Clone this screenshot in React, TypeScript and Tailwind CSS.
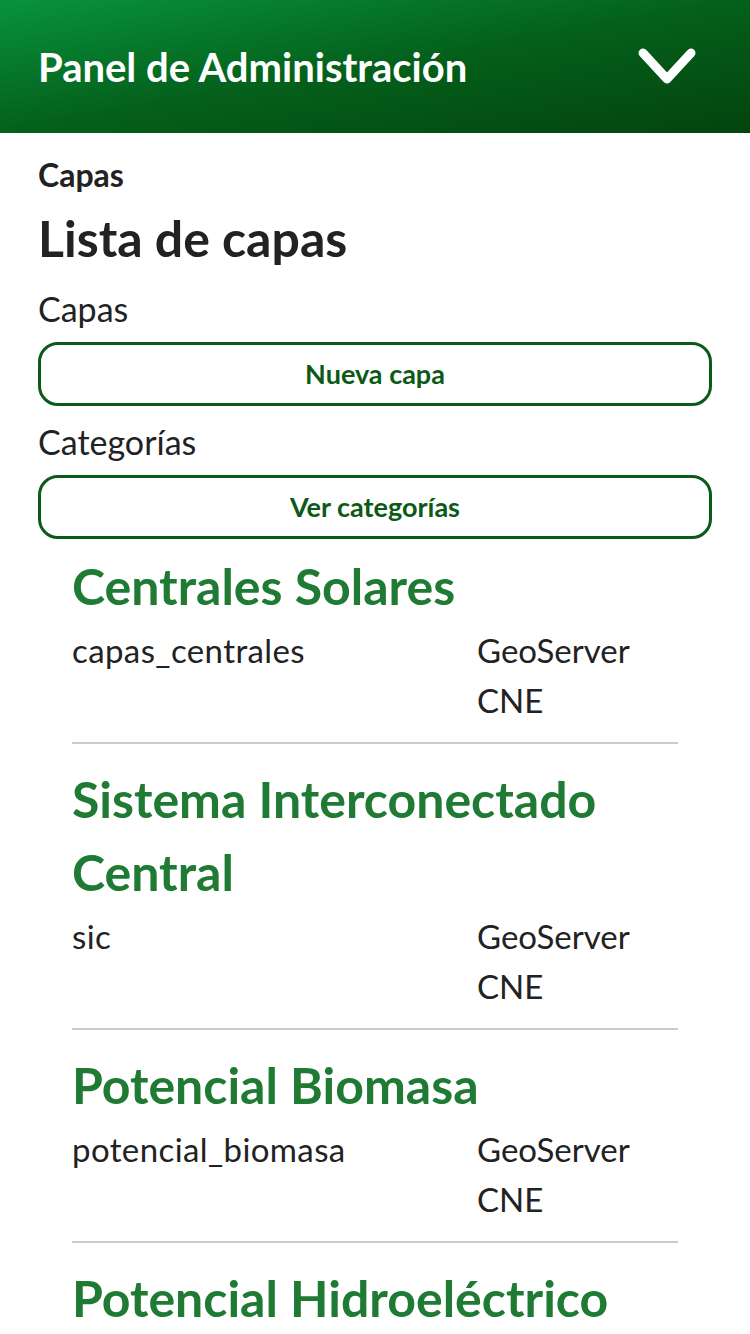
import React from "react";

const capas = [
  { title: "Sistema Interconectado Central", key: "sic" },
  { title: "Potencial Biomasa", key: "potencial_biomasa" },
];

const font = { fontFamily: "Lato, 'Noto Sans', sans-serif" };

const CapaItem = ({ title, name }: { title: string; name: string }) => (
  <div className="border-b-2 border-[#cccccc] pb-[17px] mb-[19px]">
    <h3 className="text-[50px] leading-[73px] font-bold text-[#1f7a34]">{title}</h3>
    <div className="flex text-[33px] leading-[50px] text-[#222] mt-[2px]">
      <div className="w-[405px] tracking-[0.4px]">{name}</div>
      <div className="flex flex-col">
        <span>GeoServer</span>
        <span>CNE</span>
      </div>
    </div>
  </div>
);

export default function App() {
  return (
    <div className="w-[750px] h-[1334px] overflow-hidden bg-white" style={font}>
      {/* header */}
      <div className="h-[133px] bg-gradient-to-br from-[#08933f] via-[#04601a] to-[#03440e] flex items-center justify-between pl-[38px] pr-[54px]">
        <h1 className="text-white text-[40px] font-bold">Panel de Administración</h1>
        <svg width="58" height="38" viewBox="0 0 58 38" fill="none">
          <polyline points="5,5 29,31 53,5" stroke="white" strokeWidth="9" strokeLinecap="round" strokeLinejoin="round" />
        </svg>
      </div>

      <div className="px-[38px] pt-[22px]">
        <div className="text-[32px] font-bold text-[#222] leading-[40px]">Capas</div>
        <h2 className="text-[50px] font-bold text-[#222] leading-[70px] mt-[8px]">Lista de capas</h2>
        <div className="text-[34px] text-[#222] leading-[44px] mt-[14px]">Capas</div>
        <button className="w-full h-[64px] mt-[11px] border-[3px] border-[#0b5a16] rounded-[20px] text-[27px] font-bold text-[#0b5a16]">
          Nueva capa
        </button>
        <div className="text-[34px] text-[#222] leading-[44px] mt-[14px]">Categorías</div>
        <button className="w-full h-[64px] mt-[11px] border-[3px] border-[#0b5a16] rounded-[20px] text-[27px] font-bold text-[#0b5a16]">
          Ver categorías
        </button>

        <div className="px-[34px] mt-[11px]">
          <CapaItem title="Centrales Solares" name="capas_centrales" />
          {capas.map((c) => (
            <CapaItem key={c.key} title={c.title} name={c.key} />
          ))}
          <h3 className="text-[50px] leading-[73px] font-bold text-[#1f7a34]">Potencial Hidroeléctrico</h3>
        </div>
      </div>
    </div>
  );
}
